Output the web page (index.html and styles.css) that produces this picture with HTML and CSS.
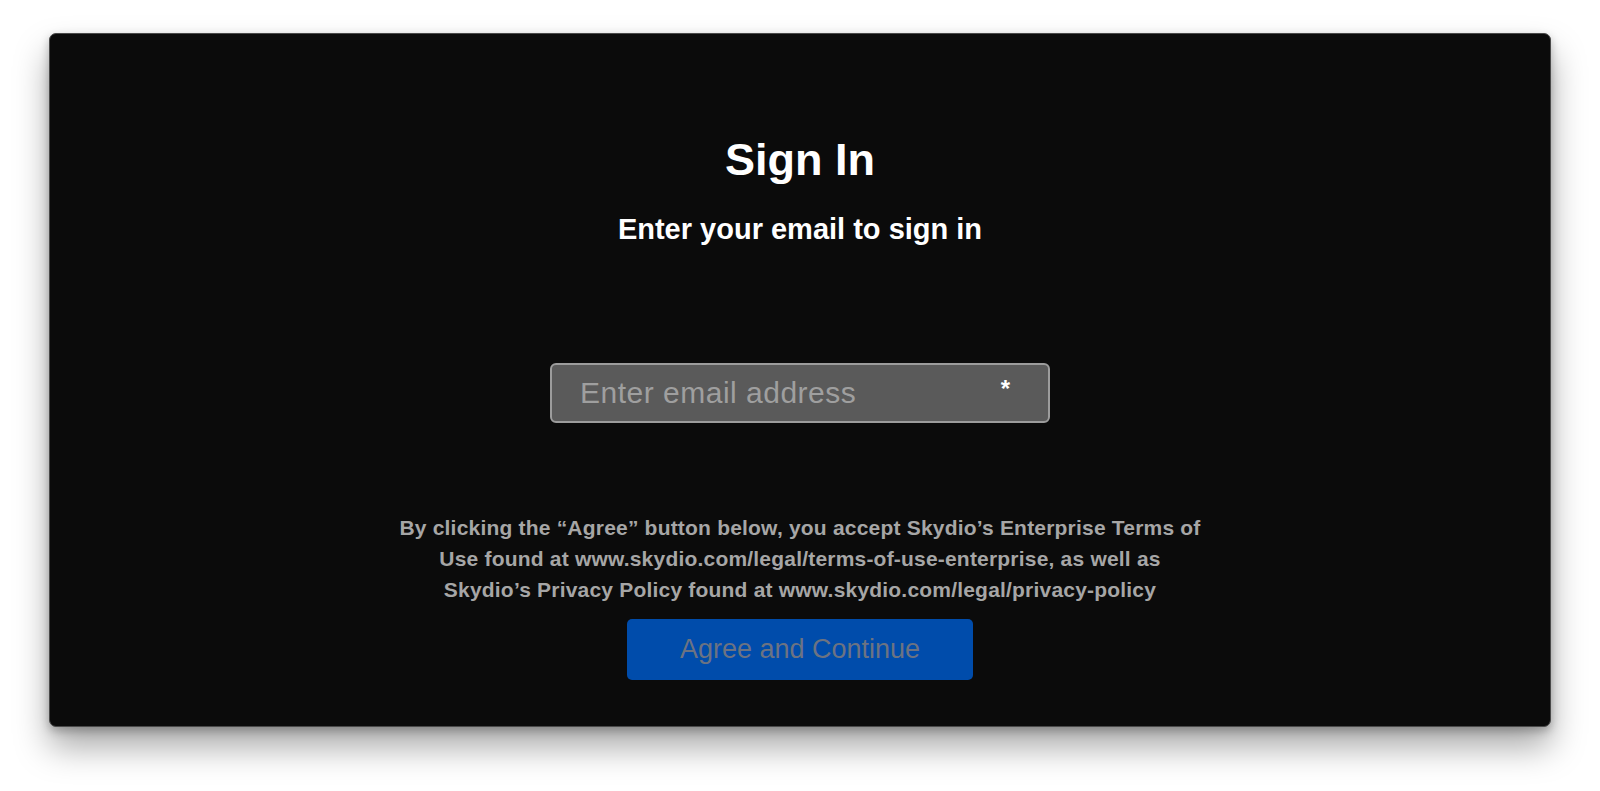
FILE: index.html
```html
<!DOCTYPE html>
<html lang="en">
<head>
<meta charset="utf-8">
<title>Sign In</title>
<link rel="stylesheet" href="styles.css">
</head>
<body>
  <div class="window">
    <h1 class="title">Sign In</h1>
    <p class="subtitle">Enter your email to sign in</p>
    <div class="field">
      <span class="placeholder">Enter email address</span>
      <span class="required">*</span>
    </div>
    <p class="terms">By clicking the “Agree” button below, you accept Skydio’s Enterprise Terms of<br>Use found at www.skydio.com/legal/terms-of-use-enterprise, as well as<br>Skydio’s Privacy Policy found at www.skydio.com/legal/privacy-policy</p>
    <button class="agree">Agree and Continue</button>
  </div>
</body>
</html>
```
FILE: styles.css
```css
html, body {
  margin: 0;
  padding: 0;
  background: #ffffff;
  height: 100%;
  overflow: hidden;
}
body {
  font-family: "Liberation Sans", Arial, sans-serif;
  padding: 33px 49px 0 49px;
  box-sizing: border-box;
}
.window {
  height: 694px;
  box-sizing: border-box;
  background: #0b0b0b;
  border: 1px solid #4a4a4a;
  border-radius: 7px;
  box-shadow: 0 20px 34px rgba(0,0,0,0.34), 0 4px 10px rgba(0,0,0,0.25);
  display: flex;
  flex-direction: column;
  align-items: center;
  padding-top: 100px;
}
.title {
  margin: 0;
  color: #ffffff;
  font-size: 45px;
  line-height: 52px;
  font-weight: 700;
}
.subtitle {
  margin: 26px 0 0;
  color: #ffffff;
  font-size: 29px;
  line-height: 34px;
  font-weight: 700;
}
.field {
  margin-top: 117px;
  width: 500px;
  height: 60px;
  box-sizing: border-box;
  background: #5a5a5a;
  border: 2px solid #9c9c9c;
  border-radius: 6px;
  display: flex;
  align-items: center;
  justify-content: space-between;
  padding: 0 38px 0 28px;
}
.placeholder {
  color: #9f9f9f;
  font-size: 30px;
  letter-spacing: 0.5px;
}
.required {
  color: #ffffff;
  font-size: 24px;
  font-weight: 700;
  margin-top: -8px;
}
.terms {
  margin: 89px 0 0;
  color: #a6a6a6;
  font-size: 21px;
  line-height: 31px;
  font-weight: 700;
  letter-spacing: 0.2px;
  text-align: center;
}
.agree {
  margin-top: 14px;
  width: 346px;
  height: 61px;
  border: none;
  border-radius: 5px;
  background: #004cab;
  color: #6c7382;
  font-family: "Liberation Sans", Arial, sans-serif;
  font-size: 27px;
  padding: 0;
}
```
